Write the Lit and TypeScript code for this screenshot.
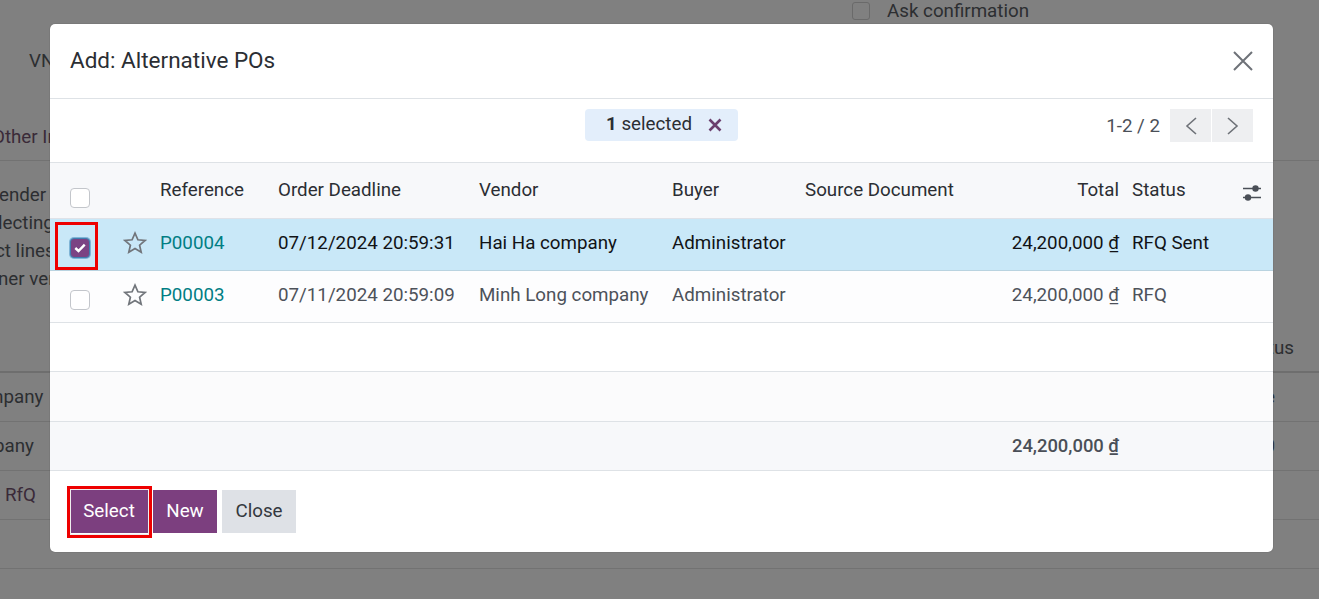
import { LitElement, html, css } from "lit";
import { customElement } from "lit/decorators.js";

const star = html`<svg class="star" viewBox="0 0 24 24" width="24" height="24"><path d="M12 2.2l2.9 6.6 7.1.7-5.4 4.7 1.6 7-6.2-3.7-6.2 3.7 1.6-7L2 9.5l7.1-.7z" fill="none" stroke="#71757b" stroke-width="1.7" stroke-linejoin="miter"/></svg>`;

@customElement("app-root")
export class AppRoot extends LitElement {
  static styles = css`
    :host { display: block; position: relative; width: 1319px; height: 599px; overflow: hidden; background: #808080;
      font-family: Roboto, "Liberation Sans", sans-serif; font-size: 18.75px; color: #2b2e33; }
    .bg { display: flex; flex-direction: column; height: 599px; color: #2c2e31; }
    .bg-top { height: 22px; display: flex; align-items: center; gap: 17px; padding-left: 852px; box-sizing: border-box; }
    .bg-check { width: 18px; height: 18px; box-sizing: border-box; border: 1px solid #6a6a6a; border-radius: 3px; }
    .bg-vn { height: 78px; display: flex; align-items: center; padding: 0 0 0 29px; box-sizing: border-box; }
    .bg-tabs { height: 61px; padding: 26px 0 0; box-sizing: border-box; border-bottom: 1px solid #727272; color: #3a2a38; line-height: 22px; white-space: nowrap; }
    .bg-tabs span { margin-left: -8px; display: inline-block; }
    .bg-para { height: 153px; padding-top: 20px; box-sizing: border-box; line-height: 28px; overflow: hidden; }
    .bg-para div { white-space: nowrap; }
    .bg-para .p1 { margin-left: -1px; }
    .bg-para .p2 { margin-left: -2px; }
    .bg-para .p3 { margin-left: -5px; }
    .bg-head { height: 59px; display: flex; justify-content: flex-end; align-items: flex-end; padding: 0 25px 12px 0; box-sizing: border-box; border-bottom: 2px solid #6e6e6e; }
    .bg-row { height: 49px; display: flex; align-items: center; justify-content: space-between; border-bottom: 1px solid #727272; box-sizing: border-box; padding-right: 44px; flex: none; overflow: hidden; }
    .bg-row .c1 { margin-left: -13px; }
    .bg-row .c2 { margin-left: -6px; }
    .bg-row .rfq { padding-left: 5px; color: #3a2a38; }
    .modal { position: absolute; left: 50px; top: 24px; width: 1223px; height: 528px; background: #fff; border-radius: 5px;
      display: flex; flex-direction: column; box-shadow: 0 0 1px #444; overflow: hidden; }
    .m-head { height: 75px; flex: none; box-sizing: border-box; border-bottom: 1px solid #dee2e6; display: flex; align-items: center; justify-content: space-between; padding: 0 19px 0 20px; }
    .m-title { font-size: 22.5px; font-weight: 400; margin: 0 0 2px; color: #2b2e33; }
    .x { display: block; margin-bottom: 1px; }
    .ctrl { height: 64px; flex: none; box-sizing: border-box; border-bottom: 1px solid #dee2e6; position: relative; display: flex; align-items: center; justify-content: flex-end; padding: 0 20px 10px 0; gap: 10px; }
    .sel { position: absolute; left: 535px; top: 10px; width: 153px; height: 32px; background: #e3eefb; border-radius: 4px; display: flex; align-items: center; justify-content: center; gap: 16px; box-sizing: border-box; padding: 0 0 2px 5px; }
    .sel b { font-weight: 700; }
    .sel svg { margin-top: 2px; }
    .pager { color: #4b5058; }
    .pbtns { display: flex; gap: 1px; }
    .pbtn { width: 41px; height: 33px; background: #eeeff1; display: flex; align-items: center; justify-content: center; }
    table { border-collapse: separate; border-spacing: 0; table-layout: fixed; width: 1223px; flex: none; }
    th, td { padding: 0; font-weight: 400; text-align: left; white-space: nowrap; box-sizing: border-box; }
    thead tr { height: 56px; background: #f7f8fa; }
    thead th { border-bottom: 1px solid #dfe2e8; vertical-align: top; padding-top: 16px; color: #2b2e33; }
    tbody td { border-bottom: 1px solid #dee2e6; }
    .r1 { height: 52px; background: #c9e8f8; color: #111316; }
    .r1 td { border-bottom-color: #b9d3e0; padding-bottom: 3px; }
    .r2 { height: 52px; background: #fdfdfe; color: #4d525a; }
    .r2 td { padding-bottom: 3px; }
    .r3 { height: 49px; background: #fff; }
    .r4 { height: 50px; background: #fbfbfc; }
    .r5 { height: 49px; background: #f7f8fa; color: #4a4f57; }
    .r5 td { font-weight: 500; font-size: 18.4px; padding-bottom: 1px; }
    .num { text-align: right; }
    .link { color: #017e84; }
    .cb { display: block; width: 20px; height: 20px; box-sizing: border-box; border: 1px solid #c3c6cb; border-radius: 4px; background: #fff; margin-left: 20px; position: relative; top: 5px; }
    .cb.h { top: 9px; }
    .cb.on { background: #7b4383; border-color: #3f7fb0; box-shadow: 0 0 0 1px #7fb4d6; display: flex; align-items: center; justify-content: center; }
    .star { display: block; }
    .opt { display: block; margin-left: 3px; position: relative; top: 5px; }
    .foot { flex: 1; display: flex; align-items: flex-start; padding: 19px 0 0 20px; gap: 5px; }
    .btn { height: 43px; display: flex; align-items: center; justify-content: center; box-sizing: border-box; background: #7c3f7f; color: #fff; padding-bottom: 2px; }
    .b1 { width: 78px; }
    .b2 { width: 64px; }
    .b3 { width: 74px; background: #dee1e6; color: #34383e; }
    .mark { position: absolute; border: 3px solid #ee0000; box-sizing: border-box; pointer-events: none; }
    .m1 { left: 55px; top: 222px; width: 43px; height: 48px; }
    .m2 { left: 67px; top: 486px; width: 85px; height: 52px; box-shadow: inset 0 0 0 1px #eee; }
  `;

  render() {
    return html`
      <div class="bg">
        <div class="bg-top"><span class="bg-check"></span><span>Ask confirmation</span></div>
        <div class="bg-vn">VN</div>
        <div class="bg-tabs"><span>Other Info</span></div>
        <div class="bg-para">
          <div class="p1">ender by</div><div class="p2">lecting</div><div class="p3">ct lines</div><div class="p2">ner ver</div>
        </div>
        <div class="bg-head">tus</div>
        <div class="bg-row"><span class="c1">mpany</span><span>e</span></div>
        <div class="bg-row"><span class="c2">pany</span><span>0</span></div>
        <div class="bg-row"><span class="rfq">RfQ</span></div>
        <div class="bg-row"></div>
      </div>

      <div class="modal">
        <div class="m-head">
          <h4 class="m-title">Add: Alternative POs</h4>
          <svg class="x" width="22" height="22" viewBox="0 0 22 22"><path d="M2 2l18 18M20 2L2 20" stroke="#6e7278" stroke-width="2" fill="none"/></svg>
        </div>
        <div class="ctrl">
          <div class="sel"><span><b>1</b> selected</span>
            <svg width="14" height="14" viewBox="0 0 14 14"><path d="M1.5 1.5l11 11M12.5 1.5l-11 11" stroke="#6b3f6e" stroke-width="2.6" fill="none"/></svg></div>
          <span class="pager">1-2 / 2</span>
          <div class="pbtns">
            <div class="pbtn"><svg width="14" height="18" viewBox="0 0 14 18"><path d="M12 1L3 9l9 8" stroke="#6e7278" stroke-width="1.6" fill="none"/></svg></div>
            <div class="pbtn"><svg width="14" height="18" viewBox="0 0 14 18"><path d="M2 1l9 8-9 8" stroke="#6e7278" stroke-width="1.6" fill="none"/></svg></div>
          </div>
        </div>
        <table>
          <colgroup><col style="width:73px"/><col style="width:37px"/><col style="width:118px"/><col style="width:201px"/><col style="width:193px"/><col style="width:133px"/><col style="width:162px"/><col style="width:152px"/><col style="width:13px"/><col style="width:107px"/><col style="width:34px"/></colgroup>
          <thead><tr>
            <th><span class="cb h"></span></th><th></th><th>Reference</th><th>Order Deadline</th><th>Vendor</th><th>Buyer</th><th>Source Document</th><th class="num">Total</th><th></th><th>Status</th>
            <th><svg class="opt" width="20" height="18" viewBox="0 0 20 18"><path d="M1 4.5h18M1 13.5h18" stroke="#4a4f57" stroke-width="1.6"/><circle cx="13.5" cy="4.5" r="3.2" fill="#4a4f57"/><circle cx="6" cy="13.5" r="3.2" fill="#4a4f57"/></svg></th>
          </tr></thead>
          <tbody>
            <tr class="r1">
              <td><span class="cb on"><svg width="12" height="10" viewBox="0 0 12 10"><path d="M1.3 5l3.2 3L10.7 1.6" stroke="#fff" stroke-width="2.4" fill="none"/></svg></span></td>
              <td>${star}</td><td class="link">P00004</td><td>07/12/2024 20:59:31</td><td>Hai Ha company</td><td>Administrator</td><td></td><td class="num">24,200,000 ₫</td><td></td><td>RFQ Sent</td><td></td>
            </tr>
            <tr class="r2">
              <td><span class="cb"></span></td>
              <td>${star}</td><td class="link">P00003</td><td>07/11/2024 20:59:09</td><td>Minh Long company</td><td>Administrator</td><td></td><td class="num">24,200,000 ₫</td><td></td><td>RFQ</td><td></td>
            </tr>
            <tr class="r3"><td colspan="11"></td></tr>
            <tr class="r4"><td colspan="11"></td></tr>
            <tr class="r5"><td colspan="7"></td><td class="num">24,200,000 ₫</td><td colspan="3"></td></tr>
          </tbody>
        </table>
        <div class="foot">
          <div class="btn b1">Select</div><div class="btn b2">New</div><div class="btn b3">Close</div>
        </div>
      </div>
      <div class="mark m1"></div>
      <div class="mark m2"></div>
    `;
  }
}
